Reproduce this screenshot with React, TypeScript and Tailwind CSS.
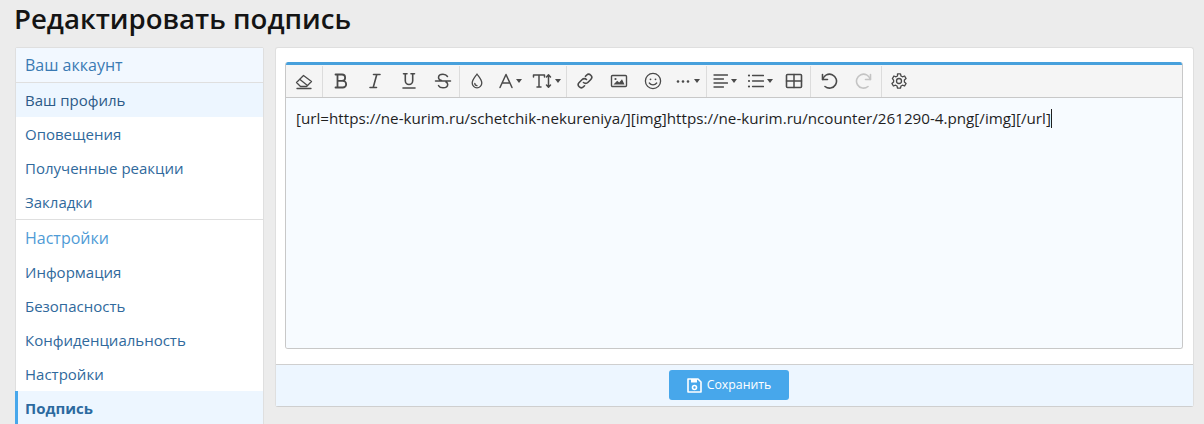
import React from "react";

const font = { fontFamily: '"Open Sans", "Noto Sans", sans-serif' };

function Ico({ w = 18, children }: { w?: number; children: React.ReactNode }) {
  return (
    <svg width={w} height={18} viewBox={`0 0 ${w} 18`} fill="none" stroke="#4a4a4a" strokeWidth="1.3" strokeLinecap="round" strokeLinejoin="round">
      {children}
    </svg>
  );
}

function Caret() {
  return <span className="ml-[3px] w-0 h-0 border-x-[3.5px] border-x-transparent border-t-[4px] border-t-[#4a4a4a]" />;
}

function Btn({ w, children }: { w: number; children: React.ReactNode }) {
  return (
    <span className="flex items-center justify-center h-[32px]" style={{ width: w }}>
      {children}
    </span>
  );
}

function Sep() {
  return <span className="w-px h-[31px] bg-[#dcdcdc]" />;
}

function Toolbar() {
  return (
    <div className="flex items-center h-[32px] bg-[#f5f5f5] border-b border-[#c8c8c8] box-content">
      <Btn w={36}>
        <Ico>
          <path d="M1.500 10.500 8.500 3.500 16.500 9.500 11.500 14.500H5.500z" />
          <path d="M5 7.500l7.500 6" />
          <path d="M2 16.500h14" />
        </Ico>
      </Btn>
      <Sep />
      <Btn w={35}>
        <Ico>
          <path d="M5.500 2.500h4.500a3 3 0 0 1 0 6.300H5.500zM5.500 8.800h5.300a3.200 3.200 0 0 1 0 6.700H5.500zM5.500 2.500v13M3.500 2.500H6M3.500 15.500H6" strokeWidth="1.8" />
        </Ico>
      </Btn>
      <Btn w={33}>
        <Ico>
          <path d="M7.500 2.500h6.500M4 15.500h6.500M10.800 2.500l-3.600 13" strokeWidth="1.6" />
        </Ico>
      </Btn>
      <Btn w={35}>
        <Ico>
          <path d="M3.500 1.800h3.500M11 1.800h3.500M5.300 1.800v7a3.700 3.700 0 0 0 7.400 0v-7M3 16h12" strokeWidth="1.6" />
        </Ico>
      </Btn>
      <Btn w={33}>
        <Ico>
          <path d="M13.500 4.500C12.500 3 11 2.300 9 2.300c-2.800 0-4.500 1.400-4.500 3.200 0 1.500 1 2.500 3 3M1.500 9h15M12 10c1.100.6 1.700 1.400 1.700 2.500 0 2-1.900 3.300-4.700 3.300-2 0-3.600-.7-4.500-2.200" strokeWidth="1.5" />
        </Ico>
      </Btn>
      <Sep />
      <Btn w={34}>
        <Ico>
          <path d="M9 2c2 3 4.800 5.700 4.800 9a4.800 4.800 0 0 1-9.600 0C4.200 7.700 7 5 9 2z" />
          <path d="M6.800 11.300a2.300 2.300 0 0 0 2.200 2.300" />
        </Ico>
      </Btn>
      <Btn w={32}>
        <Ico w={14}>
          <path d="M1 15.500 7 2.500 13 15.500M3 11h8" strokeWidth="1.5" />
        </Ico>
        <Caret />
      </Btn>
      <Btn w={40}>
        <Ico w={20}>
          <path d="M1.500 5V3h11v2M7 3v12M5 15h4M16.500 3v12M14.500 5l2-2.200 2 2.200M14.500 13l2 2.200 2-2.200" strokeWidth="1.5" />
        </Ico>
        <Caret />
      </Btn>
      <Sep />
      <Btn w={35}>
        <Ico>
          <path d="M7.500 10.500a3 3 0 0 0 4.300 0l3-3a3 3 0 0 0-4.300-4.300L9.500 4.300" strokeWidth="1.6" />
          <path d="M10.500 7.500a3 3 0 0 0-4.300 0l-3 3a3 3 0 0 0 4.300 4.300l1-1" strokeWidth="1.6" />
        </Ico>
      </Btn>
      <Btn w={33}>
        <Ico>
          <rect x="1.500" y="3.500" width="15" height="11" rx="1" strokeWidth="1.4" />
          <path d="M3.500 12.500l3.700-3.700 2 1.800 2.800-3.300 2.500 5.200z" fill="#4a4a4a" stroke="none" />
          <circle cx="5.500" cy="7" r="1.100" fill="#4a4a4a" stroke="none" />
        </Ico>
      </Btn>
      <Btn w={35}>
        <Ico>
          <circle cx="9" cy="9" r="7.600" />
          <circle cx="6.500" cy="7.300" r=".9" fill="#4a4a4a" stroke="none" />
          <circle cx="11.500" cy="7.300" r=".9" fill="#4a4a4a" stroke="none" />
          <path d="M5.300 11c1.800 2.500 5.600 2.500 7.400 0" />
        </Ico>
      </Btn>
      <Btn w={36}>
        <Ico w={15}>
          <circle cx="2" cy="9.500" r="1.300" fill="#4a4a4a" stroke="none" />
          <circle cx="7" cy="9.500" r="1.300" fill="#4a4a4a" stroke="none" />
          <circle cx="12" cy="9.500" r="1.300" fill="#4a4a4a" stroke="none" />
        </Ico>
        <Caret />
      </Btn>
      <Sep />
      <Btn w={36}>
        <Ico w={15}>
          <path d="M1 3h13.500M1 7h9.500M1 11h13.500M1 15h9.500" />
        </Ico>
        <Caret />
      </Btn>
      <Btn w={34}>
        <Ico w={17}>
          <circle cx="2" cy="3.500" r="1.100" fill="#4a4a4a" stroke="none" />
          <circle cx="2" cy="9" r="1.100" fill="#4a4a4a" stroke="none" />
          <circle cx="2" cy="14.500" r="1.100" fill="#4a4a4a" stroke="none" />
          <path d="M5.500 3.500h11M5.500 9h11M5.500 14.500h11" />
        </Ico>
        <Caret />
      </Btn>
      <Btn w={33}>
        <Ico>
          <rect x="1.500" y="2.500" width="15" height="13" rx="1" strokeWidth="1.6" />
          <path d="M1.500 9h15M9 2.500v13" strokeWidth="1.5" />
        </Ico>
      </Btn>
      <Sep />
      <Btn w={35}>
        <Ico>
          <path d="M2.500 2.500v5h5" strokeWidth="1.6" />
          <path d="M2.700 7.500A7 7 0 1 1 5 14.500" strokeWidth="1.6" />
        </Ico>
      </Btn>
      <Btn w={35}>
        <Ico>
          <path d="M15.500 2.500v5h-5" stroke="#c4c4c4" strokeWidth="1.6" />
          <path d="M15.300 7.500A7 7 0 1 0 13 14.500" stroke="#c4c4c4" strokeWidth="1.6" />
        </Ico>
      </Btn>
      <Sep />
      <Btn w={34}>
        <Ico>
          <path d="M7.500 1.800h3l.5 2.200 1.500.8 2.100-.8 1.500 2.600-1.700 1.500v1.800l1.700 1.500-1.500 2.600-2.100-.8-1.500.8-.5 2.200h-3l-.5-2.200-1.500-.8-2.100.8-1.500-2.600 1.700-1.500V8.100L2.400 6.600l1.500-2.600 2.100.8 1.500-.8z" />
          <circle cx="9" cy="9" r="2.500" />
        </Ico>
      </Btn>
    </div>
  );
}

function Row({ children }: { children: React.ReactNode }) {
  return <div className="h-[34px] flex items-center pl-[9px] text-[15px] text-[#30699c]">{children}</div>;
}

export default function App() {
  return (
    <div style={font} className="h-[424px] overflow-hidden bg-[#ececec] pl-[15px] pr-[10px]">
      <h1 className="h-[47px] -ml-px text-[27.6px] leading-[36px] font-semibold text-[#141414]">Редактировать подпись</h1>
      <div className="flex gap-[11px] items-start">
        <nav className="w-[249px] shrink-0 bg-white border border-[#dfdfdf] rounded-[2px]">
          <div className="h-[34px] flex items-center pl-[9px] text-[16px] text-[#3a7ab3] bg-[#f2f8ff] border-b border-[#dfdfdf] box-content">Ваш аккаунт</div>
          <div className="h-[34px] flex items-center pl-[9px] text-[15px] text-[#2c5a87] bg-[#edf6ff]">Ваш профиль</div>
          <Row>Оповещения</Row>
          <Row>Полученные реакции</Row>
          <div className="border-b border-[#dfdfdf]">
            <Row>Закладки</Row>
          </div>
          <div className="h-[35px] flex items-center pl-[9px] text-[16px] text-[#4f9bd6]">Настройки</div>
          <Row>Информация</Row>
          <Row>Безопасность</Row>
          <Row>Конфиденциальность</Row>
          <Row>Настройки</Row>
          <div className="h-[34px] flex items-center pl-[7px] text-[15px] font-bold text-[#2c6a9f] bg-[#edf6ff] border-l-[3px] border-[#47a7eb] -ml-px">Подпись</div>
        </nav>
        <main className="w-[919px] h-[360px] flex flex-col bg-white border border-[#dfdfdf] border-b-[#cfcfcf] rounded-[3px]">
          <div className="flex-1 pt-[14px] pl-[9px] pr-[10px]">
            <div className="h-[287px] flex flex-col border border-[#c8c8c8] border-t-0 rounded-[3px] overflow-hidden">
              <div className="h-[3px] bg-[#47a0dc] -mx-px" />
              <Toolbar />
              <div className="flex-1 bg-[#f7fbff] pl-[10px] pt-[9px] text-[15.2px] leading-[22px] text-[#1f1f1f]">
                <span>[url=https://ne-kurim.ru/schetchik-nekureniya/][img]https://ne-kurim.ru/ncounter/261290-4.png[/img][/url]</span>
                <span className="inline-block w-px h-[19px] bg-[#1f1f1f] align-[-4px]" />
              </div>
            </div>
          </div>
          <div className="h-[42px] flex items-center justify-center pr-[11px] pb-px bg-[#edf6ff] border-t border-[#cfcfcf] box-border">
            <button className="w-[120px] h-[30px] flex items-center justify-center gap-[5px] rounded-[3px] bg-[#47a7eb] text-white text-[12.3px]">
              <svg width="15" height="15" viewBox="0 0 15 15" fill="none" stroke="#fff" strokeWidth="1.6" strokeLinejoin="round">
                <path d="M1 1h10l3 3v10H1z" />
                <rect x="4" y="1" width="6" height="3.500" fill="#fff" stroke="none" />
                <circle cx="7.500" cy="9.500" r="2" />
              </svg>
              Сохранить
            </button>
          </div>
        </main>
      </div>
    </div>
  );
}
